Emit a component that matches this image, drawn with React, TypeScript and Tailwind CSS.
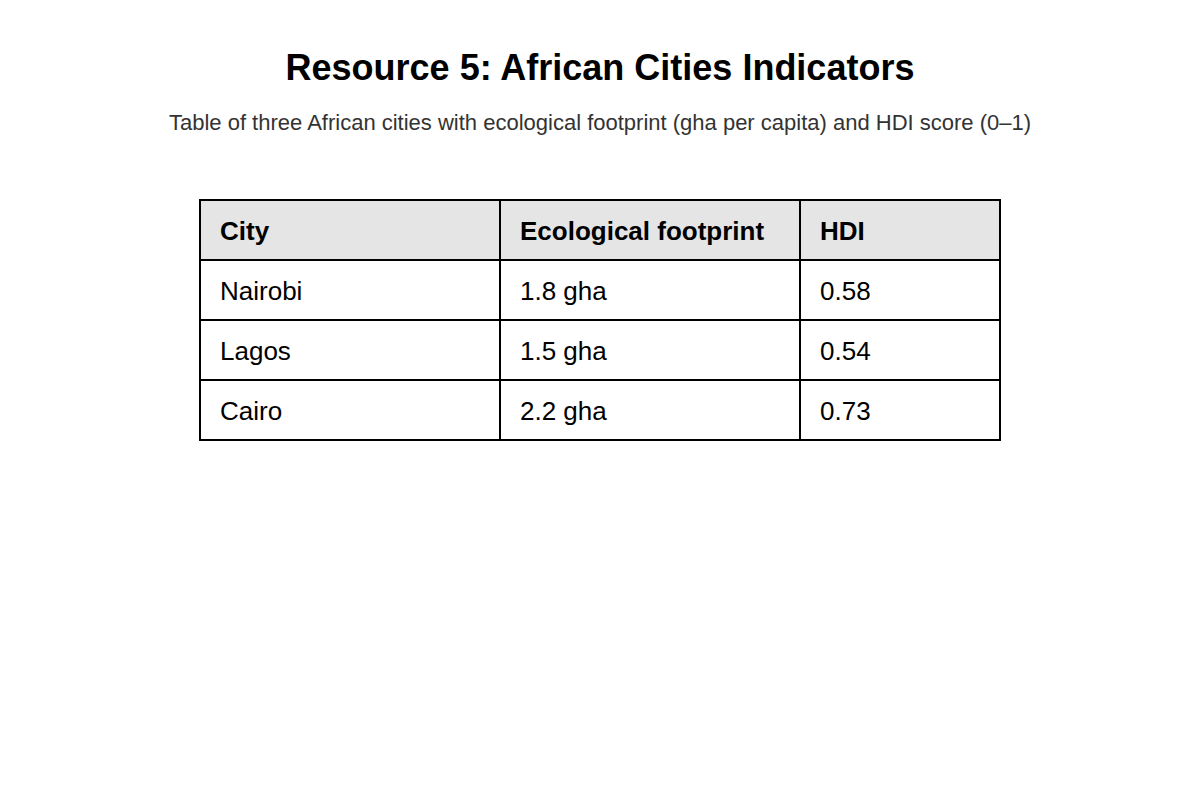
import React from 'react';

const rows = [
  { city: 'Nairobi', footprint: '1.8 gha', hdi: '0.58' },
  { city: 'Lagos', footprint: '1.5 gha', hdi: '0.54' },
  { city: 'Cairo', footprint: '2.2 gha', hdi: '0.73' },
];

export default function App() {
  return (
    <div className="min-h-screen bg-white pt-[46px] text-center font-['Liberation_Sans',Arial,sans-serif]">
      <h1 className="text-[36px] leading-[43px] font-bold text-black">
        Resource 5: African Cities Indicators
      </h1>
      <p className="mt-[17px] text-[22px] leading-[33px] text-[#333333]">
        Table of three African cities with ecological footprint (gha per capita) and HDI score (0–1)
      </p>

      <table className="mx-auto mt-[60px] w-[802px] table-fixed border-collapse border-2 border-black text-left text-[26px] text-black">
        <colgroup>
          <col className="w-[300px]" />
          <col className="w-[300px]" />
          <col className="w-[200px]" />
        </colgroup>
        <thead>
          <tr className="bg-[#e5e5e5]">
            <th className="h-[60px] border-2 border-black pt-[2px] pl-[19px] pr-4 font-bold">City</th>
            <th className="h-[60px] border-2 border-black pt-[2px] pl-[19px] pr-4 font-bold">Ecological footprint</th>
            <th className="h-[60px] border-2 border-black pt-[2px] pl-[19px] pr-4 font-bold">HDI</th>
          </tr>
        </thead>
        <tbody>
          {rows.map((r) => (
            <tr key={r.city}>
              <td className="h-[60px] border-2 border-black pt-[2px] pl-[19px] pr-4">{r.city}</td>
              <td className="h-[60px] border-2 border-black pt-[2px] pl-[19px] pr-4">{r.footprint}</td>
              <td className="h-[60px] border-2 border-black pt-[2px] pl-[19px] pr-4">{r.hdi}</td>
            </tr>
          ))}
        </tbody>
      </table>
    </div>
  );
}
